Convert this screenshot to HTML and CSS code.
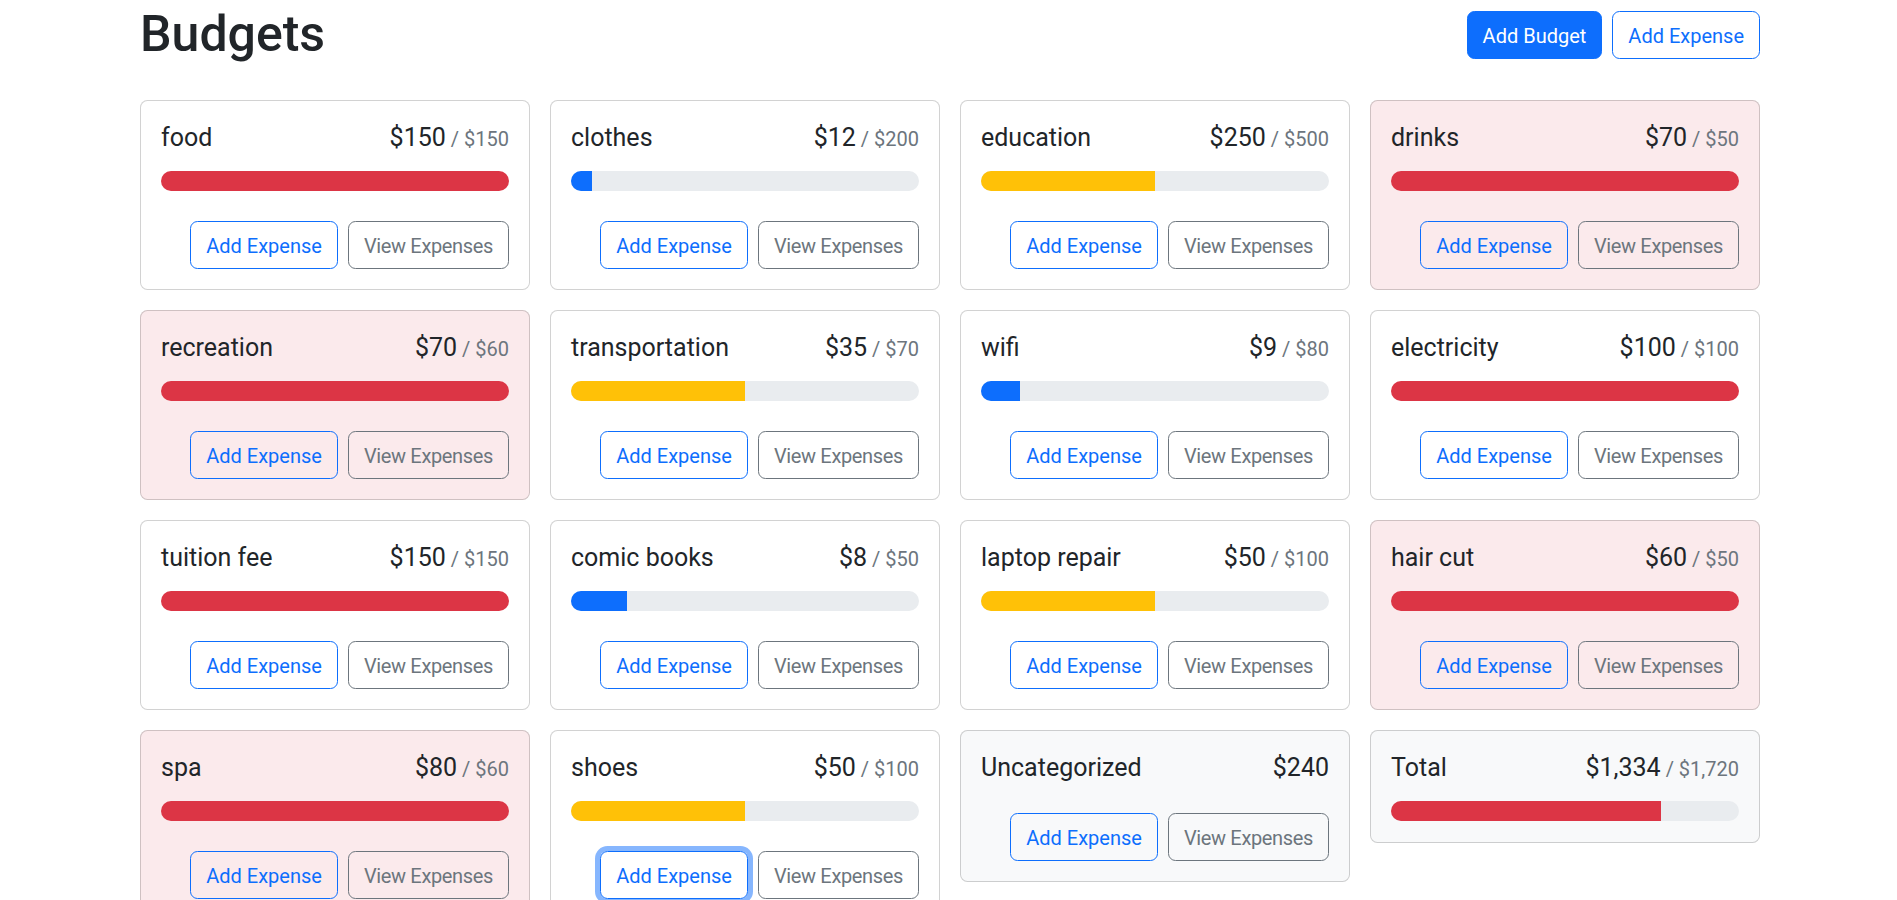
FILE: index.html
```html
<!DOCTYPE html>
<html lang="en">
<head>
<meta charset="utf-8">
<title>Budgets</title>
<link rel="stylesheet" href="styles.css">
</head>
<body>
<div class="container">
  <div class="header">
    <h1 class="title">Budgets</h1>
    <button class="btn btn-primary">Add Budget</button>
    <button class="btn btn-outline-primary">Add Expense</button>
  </div>
  <div class="grid">
    <div class="card over">
      <div class="card-body">
        <div class="card-title"><div class="name">food</div><div class="amount">$150<span class="max">/ $150</span></div></div>
        <div class="progress"><div class="bar danger" style="width:100%"></div></div>
        <div class="actions"><button class="btn btn-outline-primary push">Add Expense</button><button class="btn btn-outline-secondary">View Expenses</button></div>
      </div>
    </div>
    <div class="card">
      <div class="card-body">
        <div class="card-title"><div class="name">clothes</div><div class="amount">$12<span class="max">/ $200</span></div></div>
        <div class="progress"><div class="bar primary" style="width:6%"></div></div>
        <div class="actions"><button class="btn btn-outline-primary push">Add Expense</button><button class="btn btn-outline-secondary">View Expenses</button></div>
      </div>
    </div>
    <div class="card">
      <div class="card-body">
        <div class="card-title"><div class="name">education</div><div class="amount">$250<span class="max">/ $500</span></div></div>
        <div class="progress"><div class="bar warning" style="width:50%"></div></div>
        <div class="actions"><button class="btn btn-outline-primary push">Add Expense</button><button class="btn btn-outline-secondary">View Expenses</button></div>
      </div>
    </div>
    <div class="card danger-bg">
      <div class="card-body">
        <div class="card-title"><div class="name">drinks</div><div class="amount">$70<span class="max">/ $50</span></div></div>
        <div class="progress"><div class="bar danger" style="width:100%"></div></div>
        <div class="actions"><button class="btn btn-outline-primary push">Add Expense</button><button class="btn btn-outline-secondary">View Expenses</button></div>
      </div>
    </div>

    <div class="card danger-bg">
      <div class="card-body">
        <div class="card-title"><div class="name">recreation</div><div class="amount">$70<span class="max">/ $60</span></div></div>
        <div class="progress"><div class="bar danger" style="width:100%"></div></div>
        <div class="actions"><button class="btn btn-outline-primary push">Add Expense</button><button class="btn btn-outline-secondary">View Expenses</button></div>
      </div>
    </div>
    <div class="card">
      <div class="card-body">
        <div class="card-title"><div class="name">transportation</div><div class="amount">$35<span class="max">/ $70</span></div></div>
        <div class="progress"><div class="bar warning" style="width:50%"></div></div>
        <div class="actions"><button class="btn btn-outline-primary push">Add Expense</button><button class="btn btn-outline-secondary">View Expenses</button></div>
      </div>
    </div>
    <div class="card">
      <div class="card-body">
        <div class="card-title"><div class="name">wifi</div><div class="amount">$9<span class="max">/ $80</span></div></div>
        <div class="progress"><div class="bar primary" style="width:11.25%"></div></div>
        <div class="actions"><button class="btn btn-outline-primary push">Add Expense</button><button class="btn btn-outline-secondary">View Expenses</button></div>
      </div>
    </div>
    <div class="card">
      <div class="card-body">
        <div class="card-title"><div class="name">electricity</div><div class="amount">$100<span class="max">/ $100</span></div></div>
        <div class="progress"><div class="bar danger" style="width:100%"></div></div>
        <div class="actions"><button class="btn btn-outline-primary push">Add Expense</button><button class="btn btn-outline-secondary">View Expenses</button></div>
      </div>
    </div>

    <div class="card">
      <div class="card-body">
        <div class="card-title"><div class="name">tuition fee</div><div class="amount">$150<span class="max">/ $150</span></div></div>
        <div class="progress"><div class="bar danger" style="width:100%"></div></div>
        <div class="actions"><button class="btn btn-outline-primary push">Add Expense</button><button class="btn btn-outline-secondary">View Expenses</button></div>
      </div>
    </div>
    <div class="card">
      <div class="card-body">
        <div class="card-title"><div class="name">comic books</div><div class="amount">$8<span class="max">/ $50</span></div></div>
        <div class="progress"><div class="bar primary" style="width:16%"></div></div>
        <div class="actions"><button class="btn btn-outline-primary push">Add Expense</button><button class="btn btn-outline-secondary">View Expenses</button></div>
      </div>
    </div>
    <div class="card">
      <div class="card-body">
        <div class="card-title"><div class="name">laptop repair</div><div class="amount">$50<span class="max">/ $100</span></div></div>
        <div class="progress"><div class="bar warning" style="width:50%"></div></div>
        <div class="actions"><button class="btn btn-outline-primary push">Add Expense</button><button class="btn btn-outline-secondary">View Expenses</button></div>
      </div>
    </div>
    <div class="card danger-bg">
      <div class="card-body">
        <div class="card-title"><div class="name">hair cut</div><div class="amount">$60<span class="max">/ $50</span></div></div>
        <div class="progress"><div class="bar danger" style="width:100%"></div></div>
        <div class="actions"><button class="btn btn-outline-primary push">Add Expense</button><button class="btn btn-outline-secondary">View Expenses</button></div>
      </div>
    </div>

    <div class="card danger-bg">
      <div class="card-body">
        <div class="card-title"><div class="name">spa</div><div class="amount">$80<span class="max">/ $60</span></div></div>
        <div class="progress"><div class="bar danger" style="width:100%"></div></div>
        <div class="actions"><button class="btn btn-outline-primary push">Add Expense</button><button class="btn btn-outline-secondary">View Expenses</button></div>
      </div>
    </div>
    <div class="card">
      <div class="card-body">
        <div class="card-title"><div class="name">shoes</div><div class="amount">$50<span class="max">/ $100</span></div></div>
        <div class="progress"><div class="bar warning" style="width:50%"></div></div>
        <div class="actions"><button class="btn btn-outline-primary push focused">Add Expense</button><button class="btn btn-outline-secondary">View Expenses</button></div>
      </div>
    </div>
    <div class="card light-bg">
      <div class="card-body">
        <div class="card-title"><div class="name">Uncategorized</div><div class="amount">$240</div></div>
        <div class="actions"><button class="btn btn-outline-primary push">Add Expense</button><button class="btn btn-outline-secondary">View Expenses</button></div>
      </div>
    </div>
    <div class="card light-bg">
      <div class="card-body">
        <div class="card-title"><div class="name">Total</div><div class="amount">$1,334<span class="max">/ $1,720</span></div></div>
        <div class="progress"><div class="bar danger" style="width:77.56%"></div></div>
      </div>
    </div>
  </div>
</div>
</body>
</html>
```

FILE: styles.css
```css
html {
  scrollbar-width: none;
}

body {
  margin: 0;
  padding-left: 3px;
  font-family: Roboto, "Noto Sans", "Liberation Sans", Arial, sans-serif;
  font-size: 20px;
  line-height: 1.5;
  color: #212529;
  background: #fff;
}

.container {
  width: 1650px;
  box-sizing: border-box;
  padding: 0 15px;
  margin: 0 auto;
}

.header {
  display: flex;
  align-items: center;
  gap: 10px;
  margin-bottom: 30px;
}

.title {
  margin: 0 auto 6.5px 0;
  padding-top: 3.5px;
  font-size: 50px;
  font-weight: 500;
  line-height: 1.2;
}

.btn {
  font-family: inherit;
  font-size: 20px;
  line-height: 1.5;
  padding: 9px 15px 6.5px;
  border: 1px solid transparent;
  border-radius: 7.5px;
  background: transparent;
  cursor: pointer;
  white-space: nowrap;
}

.btn-primary {
  background: #0d6efd;
  border-color: #0d6efd;
  color: #fff;
}

.btn-outline-primary {
  color: #0d6efd;
  border-color: #0d6efd;
}

.btn-outline-secondary {
  color: #6c757d;
  border-color: #6c757d;
  letter-spacing: -0.35px;
}

.btn.focused {
  box-shadow: 0 0 0 5px rgba(13, 110, 253, 0.5);
}

.grid {
  display: grid;
  grid-template-columns: repeat(4, 1fr);
  gap: 20px;
  align-items: flex-start;
}

.card {
  border: 1px solid rgba(0, 0, 0, 0.175);
  border-radius: 7.5px;
  background: #fff;
}

.card.danger-bg {
  background: rgba(220, 53, 69, 0.1);
}

.card.light-bg {
  background: #f8f9fa;
}

.card-body {
  padding: 20.25px 20px;
}

.card-title {
  display: flex;
  justify-content: space-between;
  align-items: baseline;
  font-size: 25px;
  line-height: 1.2;
  padding-top: 2px;
  margin-bottom: 18px;
}

.name {
  margin-right: 10px;
}

.amount {
  display: flex;
  align-items: baseline;
}

.max {
  font-size: 20px;
  color: #6c757d;
  margin-left: 5px;
}

.progress {
  height: 20px;
  background: #e9ecef;
  border-radius: 50rem;
  overflow: hidden;
  display: flex;
}

.bar {
  height: 100%;
}

.bar.danger { background: #dc3545; }
.bar.primary { background: #0d6efd; }
.bar.warning { background: #ffc107; }

.actions {
  display: flex;
  gap: 10px;
  margin-top: 30px;
}

.push {
  margin-left: auto;
}
```
